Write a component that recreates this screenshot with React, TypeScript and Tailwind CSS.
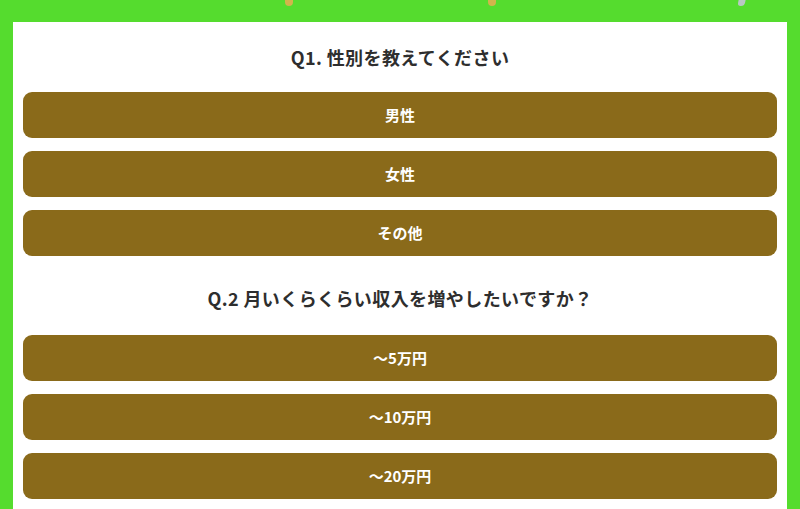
const Q1 = ['男性', '女性', 'その他']
const Q2 = ['〜5万円', '〜10万円', '〜20万円']

function Choice({ label }: { label: string }) {
  return (
    <button
      type="button"
      className="flex h-[46px] w-full items-center justify-center rounded-[9px] bg-[#8a6a1a] text-[15px] font-bold text-white"
    >
      {label}
    </button>
  )
}

export default function App() {
  return (
    <div
      className="relative min-h-[509px] w-full overflow-hidden bg-[#55dc2e] px-[13px] pt-[22px]"
      style={{ fontFamily: '"Noto Sans CJK JP", "Noto Sans", sans-serif' }}
    >
      {/* 上に切れた見出しの端 */}
      <span className="absolute left-[285px] top-0 h-[6px] w-[8px] rounded-b-sm bg-[#d2b44c]" />
      <span className="absolute left-[488px] top-0 h-[6px] w-[8px] rounded-b-sm bg-[#d2b44c]" />
      <span className="absolute left-[738px] top-0 h-[6px] w-[7px] -skew-x-12 rounded-b-sm bg-[#b9c7c4]" />

      <div className="min-h-[487px] bg-white px-[10px]">
        <h2 className="pt-[24px] pb-[24px] text-center text-[18px] leading-[22px] font-bold tracking-[0.4px] text-[#2e2e2e]">
          Q1. 性別を教えてください
        </h2>
        <div className="flex flex-col gap-[13px]">
          {Q1.map((l) => (
            <Choice key={l} label={l} />
          ))}
        </div>

        <h2 className="pt-[31px] pb-[26px] text-center text-[18px] leading-[22px] font-bold tracking-[0.4px] text-[#2e2e2e]">
          Q.2 月いくらくらい収入を増やしたいですか？
        </h2>
        <div className="flex flex-col gap-[13px]">
          {Q2.map((l) => (
            <Choice key={l} label={l} />
          ))}
        </div>
      </div>
    </div>
  )
}
